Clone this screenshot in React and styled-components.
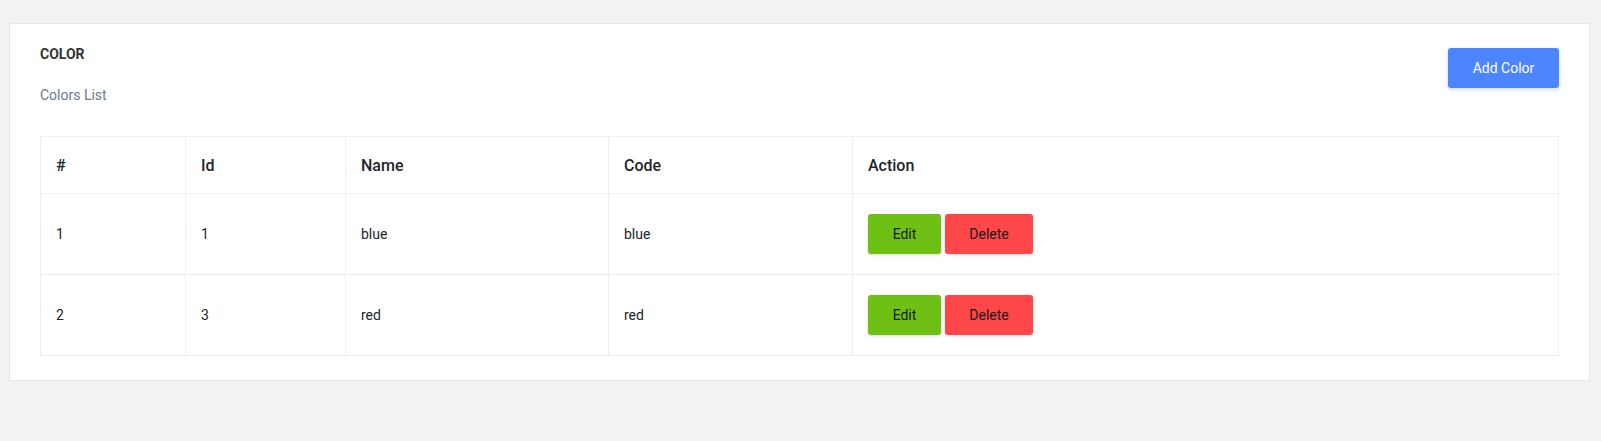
import styled, { createGlobalStyle } from "styled-components";

const GlobalStyle = createGlobalStyle`
  body {
    margin: 0;
    background: #f2f2f2;
    font-family: Roboto, "Liberation Sans", sans-serif;
  }
`;

const colors = [
  { id: 1, name: "blue", code: "blue" },
  { id: 3, name: "red", code: "red" },
];

const App = () => {
  return (
    <Page>
      <GlobalStyle />
      <Card>
        <Header>
          <div>
            <Title>COLOR</Title>
            <Subtitle>Colors List</Subtitle>
          </div>
          <AddButton>Add Color</AddButton>
        </Header>

        <Table>
          <colgroup>
            <col style={{ width: 145 }} />
            <col style={{ width: 160 }} />
            <col style={{ width: 263 }} />
            <col style={{ width: 244 }} />
            <col />
          </colgroup>
          <thead>
            <tr>
              <Th>#</Th>
              <Th>Id</Th>
              <Th>Name</Th>
              <Th>Code</Th>
              <Th>Action</Th>
            </tr>
          </thead>
          <tbody>
            {colors.map((c, i) => (
              <tr key={c.id}>
                <Td>{i + 1}</Td>
                <Td>{c.id}</Td>
                <Td>{c.name}</Td>
                <Td>{c.code}</Td>
                <Td>
                  <Actions>
                    <ActionButton $variant="edit">Edit</ActionButton>
                    <ActionButton $variant="delete">Delete</ActionButton>
                  </Actions>
                </Td>
              </tr>
            ))}
          </tbody>
        </Table>
      </Card>
    </Page>
  );
};

export default App;

const Page = styled.div`
  padding: 23px 11px 60px 9px;
`;

const Card = styled.div`
  background: #fff;
  border: 1px solid #e6e6e6;
  padding: 20px 30px 24px 30px;
`;

const Header = styled.div`
  display: flex;
  justify-content: space-between;
  align-items: flex-start;
`;

const Title = styled.h4`
  margin: 0;
  font-size: 14px;
  line-height: 20px;
  font-weight: 700;
  color: #333;
`;

const Subtitle = styled.p`
  margin: 21px 0 0;
  font-size: 14px;
  line-height: 20px;
  color: #6c7a89;
`;

const AddButton = styled.button`
  margin-top: 4px;
  width: 111px;
  height: 40px;
  border: none;
  border-radius: 3px;
  background: #4d84ff;
  color: #fff;
  font-family: inherit;
  font-size: 14px;
  box-shadow: 0 2px 4px rgba(77, 132, 255, 0.25);
  cursor: pointer;
`;

const Table = styled.table`
  width: 100%;
  margin-top: 31px;
  border-collapse: collapse;
  table-layout: fixed;
  border: 1px solid #eeeeee;
  color: #212529;
`;

const Th = styled.th`
  height: 56px;
  padding: 0 15px;
  text-align: left;
  font-size: 16px;
  font-weight: 500;
  border: 1px solid #eeeeee;
`;

const Td = styled.td`
  height: 80px;
  padding: 0 15px;
  font-size: 14px;
  border: 1px solid #eeeeee;
`;

const Actions = styled.div`
  display: flex;
  gap: 4px;
`;

const ActionButton = styled.button`
  height: 40px;
  width: ${(p) => (p.$variant === "edit" ? "73px" : "88px")};
  border: none;
  border-radius: 3px;
  background: ${(p) => (p.$variant === "edit" ? "#6fc015" : "#ff4649")};
  color: #1a1a1a;
  font-family: inherit;
  font-size: 14px;
  box-shadow: 0 1px 3px rgba(0, 0, 0, 0.15);
  cursor: pointer;
`;
